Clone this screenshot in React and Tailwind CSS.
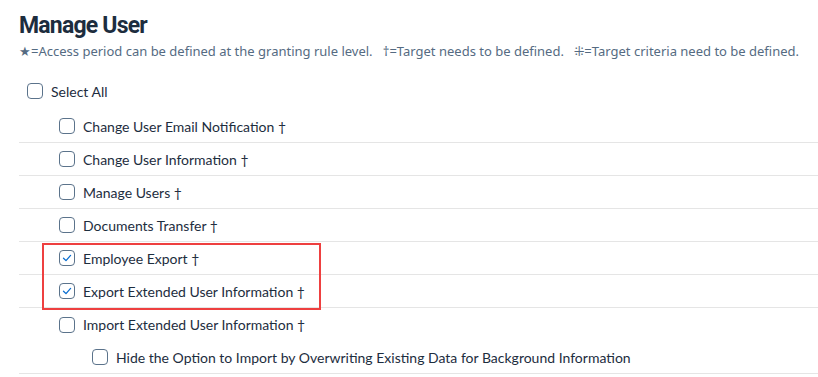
import React from 'react';

const font = { fontFamily: 'Lato, "Noto Sans", "Liberation Sans", sans-serif' };
const titleFont = { fontFamily: 'Roboto, "Liberation Sans", sans-serif' };
const noteFont = { fontFamily: '"Noto Sans", "Liberation Sans", sans-serif' };

const Box = ({ checked }) => (
  <span className="flex h-4 w-4 shrink-0 items-center justify-center rounded-[4px] border border-[#5b738b] bg-white">
    {checked && (
      <svg width="10" height="10" viewBox="0 0 10 10" fill="none">
        <path d="M1.5 5.2 L4 7.6 L8.6 2.4" stroke="#0a6ed1" strokeWidth="1.3" strokeLinecap="round" strokeLinejoin="round" />
      </svg>
    )}
  </span>
);

const rows = [
  { label: 'Change User Email Notification †', line: true },
  { label: 'Change User Information †', line: true },
  { label: 'Manage Users †', line: true },
  { label: 'Documents Transfer †', line: true },
  { label: 'Employee Export †', line: true, checked: true },
  { label: 'Export Extended User Information †', line: true, checked: true },
  { label: 'Import Extended User Information †', line: false },
  { label: 'Hide the Option to Import by Overwriting Existing Data for Background Information', line: true, sub: true },
];

export default function App() {
  return (
    <div className="h-[377px] w-[818px] overflow-hidden bg-white text-[#1d2d3e]" style={font}>
      <div className="pl-[19px] pt-[10px]">
        <h1 className="text-[23px] font-bold leading-[32px] tracking-[-0.8px]" style={titleFont}>Manage User</h1>
        <p className="mt-[1px] text-[13px] leading-[16px] text-[#556b82]" style={noteFont}>
          ★=Access period can be defined at the granting rule level.&nbsp;&nbsp; †=Target needs to be defined.&nbsp;&nbsp; ⁜=Target criteria need to be defined.
        </p>
        <div className="mt-[17px] flex h-[30px] items-center gap-[8px] pl-[8px] text-[14px]">
          <Box />
          <span>Select All</span>
        </div>
        <div className="relative mt-[4px]">
          {rows.map((r) => (
            <div
              key={r.label}
              className={`flex h-[33px] items-center gap-[8px] text-[14px] ${r.sub ? 'pl-[73px]' : 'pl-[40px]'} ${r.line ? 'border-b border-[#e5e5e5]' : ''}`}
            >
              <Box checked={r.checked} />
              <span>{r.label}</span>
            </div>
          ))}
          <div className="pointer-events-none absolute left-[23px] top-[133px] h-[67px] w-[279px] border-2 border-[#ee4040]" />
        </div>
      </div>
    </div>
  );
}
